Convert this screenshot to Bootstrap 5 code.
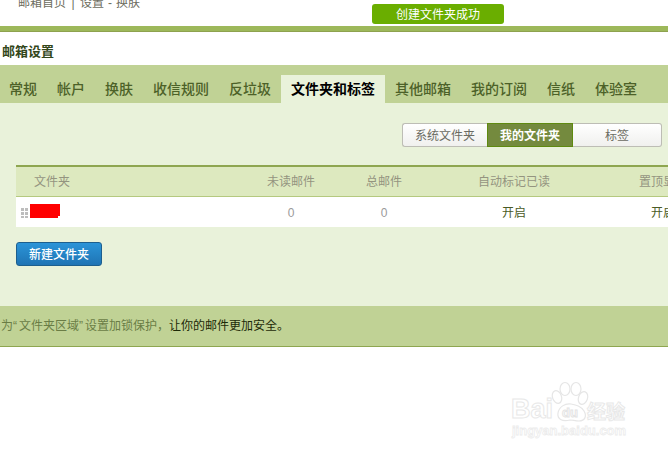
<!DOCTYPE html>
<html lang="zh-CN">
<head>
<meta charset="utf-8">
<title>邮箱设置</title>
<link href="https://cdn.jsdelivr.net/npm/bootstrap@5.3.0/dist/css/bootstrap.min.css" rel="stylesheet">
<style>
html,body{height:100%;overflow:hidden}
body{font-family:"Liberation Sans","Noto Sans CJK SC",sans-serif;font-size:12px;background:#fff;color:#3c4f1c;position:relative}
.topzone{height:26px;overflow:hidden;position:relative}
.crumbs{margin:-4px 0 0 18px;line-height:14px;color:#6d6d60;font-size:12px;display:flex}
.crumbs i{font-style:normal;width:14px;text-align:center}
.crumbs u{text-decoration:none;width:12px;text-align:center}
.toast-ok{position:absolute;left:372px;top:4px;width:132px;height:20px;line-height:22px;background:#6aae00;color:#fff;border-radius:3px;text-align:center;font-size:12px}
.greenbar{height:6px;background:#9db85a;border-bottom:1px solid #8ea24f}
.pagetitle{height:33px;padding:11px 0 0 2px;font-size:13px;font-weight:700;line-height:18px;color:#33471a}
.tabbar{height:38px;background:#c0d295;padding-top:10px;display:flex}
.tabitem{height:28px;line-height:28px;padding:0 10px;font-size:14px;font-weight:500;color:#4c6128}
.tabitem.tabfirst{padding-left:9px}
.tabitem.tabcur{background:#e9f2da;color:#000;font-weight:700}
.mainpane{background:#e9f2da;height:203px;padding:20px 0 0 16px}
.segwrap{display:flex;width:260px;height:24px;margin-left:386px;margin-bottom:18px;font-size:12px}
.segbtn{flex:1 1 0;border:1px solid #bdbdb5;background:linear-gradient(#fff,#f0f0ee);color:#6b6b62;text-align:center;line-height:24px}
.segbtn:first-child{border-radius:3px 0 0 3px;flex:0 0 85px;border-right:0}
.segbtn.segcur{flex:0 0 86px;background:#748a3e;border-color:#5f8a10;color:#fff;font-weight:700}
.segbtn:last-child{border-radius:0 3px 3px 0;border-left:0}
.tblclip{width:652px;overflow:hidden}
table.foldtbl{width:712px;table-layout:fixed;margin:0;border-top:2px solid #8ea650;--bs-table-bg:transparent}
.foldtbl th,.foldtbl td{padding:0;border:0;text-align:center;font-weight:400;font-size:12px;vertical-align:middle}
.foldtbl thead th{height:30px;background:#dde9bf;color:#94947f;border-bottom:1px solid #b5c97f;padding-top:2px}
.foldtbl tbody td{height:31px;background:#fff;color:#9a9a9a;padding-top:2px}
.foldtbl tbody td.onstate{color:#4a5b25}
.foldtbl .firstcol{text-align:left;padding-left:18px}
.foldtbl tbody .firstcol{padding:0 0 0 5px}
.namecell{display:flex;align-items:flex-start;height:100%}
.dots{width:7px;height:10px;margin-top:11px;margin-right:2px;background-image:radial-gradient(circle at 1.5px 1.5px,#bdbdbd 1.5px,transparent 1.6px);background-size:4px 4px}
.redmark{width:30px;height:14px;background:linear-gradient(#f00,#f00) 0 12px/28px 2px no-repeat,linear-gradient(#f00,#f00) 0 0/30px 12px no-repeat;margin-top:7px}
.btn.newfold{margin-top:15px;width:86px;height:24px;padding:0;line-height:24px;font-size:12px;font-weight:500;color:#fff;background:linear-gradient(#2b94d8,#1f74b4);border:1px solid #1d5f8e;border-radius:3px;display:block}
.tipbar{height:41px;background:#c0d295;border-bottom:1px solid #8ea650;line-height:40px;padding-left:1px;font-size:12px;color:#6a7d45;white-space:nowrap}
.tipbar b{font-weight:400;color:#1d2a08}
.tipbar span{display:inline-block;width:6px}
.wm{position:absolute;left:510px;top:380px;width:150px;height:70px;pointer-events:none;color:transparent}
.wm svg{position:absolute;left:0;top:0}
.wm1{position:absolute;left:1px;top:14px;font-size:27px;font-weight:700;line-height:30px;-webkit-text-stroke:1px #e8e8e8}
.wm2{position:absolute;left:52px;top:25px;font-size:13px;font-weight:700;line-height:16px;-webkit-text-stroke:1px #e4e4e4}
.wm3{position:absolute;left:77px;top:20px;font-size:19px;font-weight:700;line-height:22px;-webkit-text-stroke:1px #e8e8e8;font-family:"Noto Sans CJK SC",sans-serif;white-space:nowrap}
.wm4{position:absolute;left:2px;top:43px;font-size:13px;font-weight:700;line-height:16px;-webkit-text-stroke:.8px #ececec;white-space:nowrap}
</style>
</head>
<body>
<div class="topzone">
  <div class="crumbs"><span>邮箱首页</span><i>|</i><span>设置</span><u>-</u><span>换肤</span></div>
  <div class="toast-ok">创建文件夹成功</div>
</div>
<div class="greenbar"></div>
<div class="pagetitle">邮箱设置</div>
<div class="tabbar">
  <div class="tabitem tabfirst">常规</div>
  <div class="tabitem">帐户</div>
  <div class="tabitem">换肤</div>
  <div class="tabitem">收信规则</div>
  <div class="tabitem">反垃圾</div>
  <div class="tabitem tabcur">文件夹和标签</div>
  <div class="tabitem">其他邮箱</div>
  <div class="tabitem">我的订阅</div>
  <div class="tabitem">信纸</div>
  <div class="tabitem">体验室</div>
</div>
<div class="mainpane">
  <div class="segwrap">
    <div class="segbtn">系统文件夹</div>
    <div class="segbtn segcur">我的文件夹</div>
    <div class="segbtn">标签</div>
  </div>
  <div class="tblclip">
    <table class="table foldtbl">
      <colgroup><col style="width:228px"><col style="width:94px"><col style="width:92px"><col style="width:168px"><col style="width:130px"></colgroup>
      <thead><tr><th class="firstcol">文件夹</th><th>未读邮件</th><th>总邮件</th><th>自动标记已读</th><th>置顶显示</th></tr></thead>
      <tbody><tr>
        <td class="firstcol"><div class="namecell"><span class="dots"></span><span class="redmark"></span></div></td>
        <td>0</td><td>0</td><td class="onstate">开启</td><td class="onstate">开启</td>
      </tr></tbody>
    </table>
  </div>
  <button type="button" class="btn newfold">新建文件夹</button>
</div>
<div class="tipbar">为<span>“</span>文件夹区域<span>”</span>设置加锁保护，<b>让你的邮件更加安全。</b></div>
<div class="wm">
  <svg width="150" height="60" viewBox="0 0 150 60" fill="none" stroke="#e6e6e6" stroke-width="1.2">
    <ellipse cx="47" cy="17" rx="4.5" ry="6.5" transform="rotate(-20 47 17)"/>
    <ellipse cx="55" cy="9" rx="5" ry="6.5"/>
    <ellipse cx="66" cy="9" rx="5" ry="6.5"/>
    <ellipse cx="73" cy="18" rx="4.5" ry="6.5" transform="rotate(20 73 18)"/>
    <path d="M48 33c1-6 7-10 13-9 5 1 10 2 13 7 3 5 1 10-5 10-4 0-6-1-9-1-8 2-13-1-12-7z"/>
  </svg>
  <div class="wm1">Bai</div>
  <div class="wm2">du</div>
  <div class="wm3">经验</div>
  <div class="wm4">jingyan.baidu.com</div>
</div>
</body>
</html>
